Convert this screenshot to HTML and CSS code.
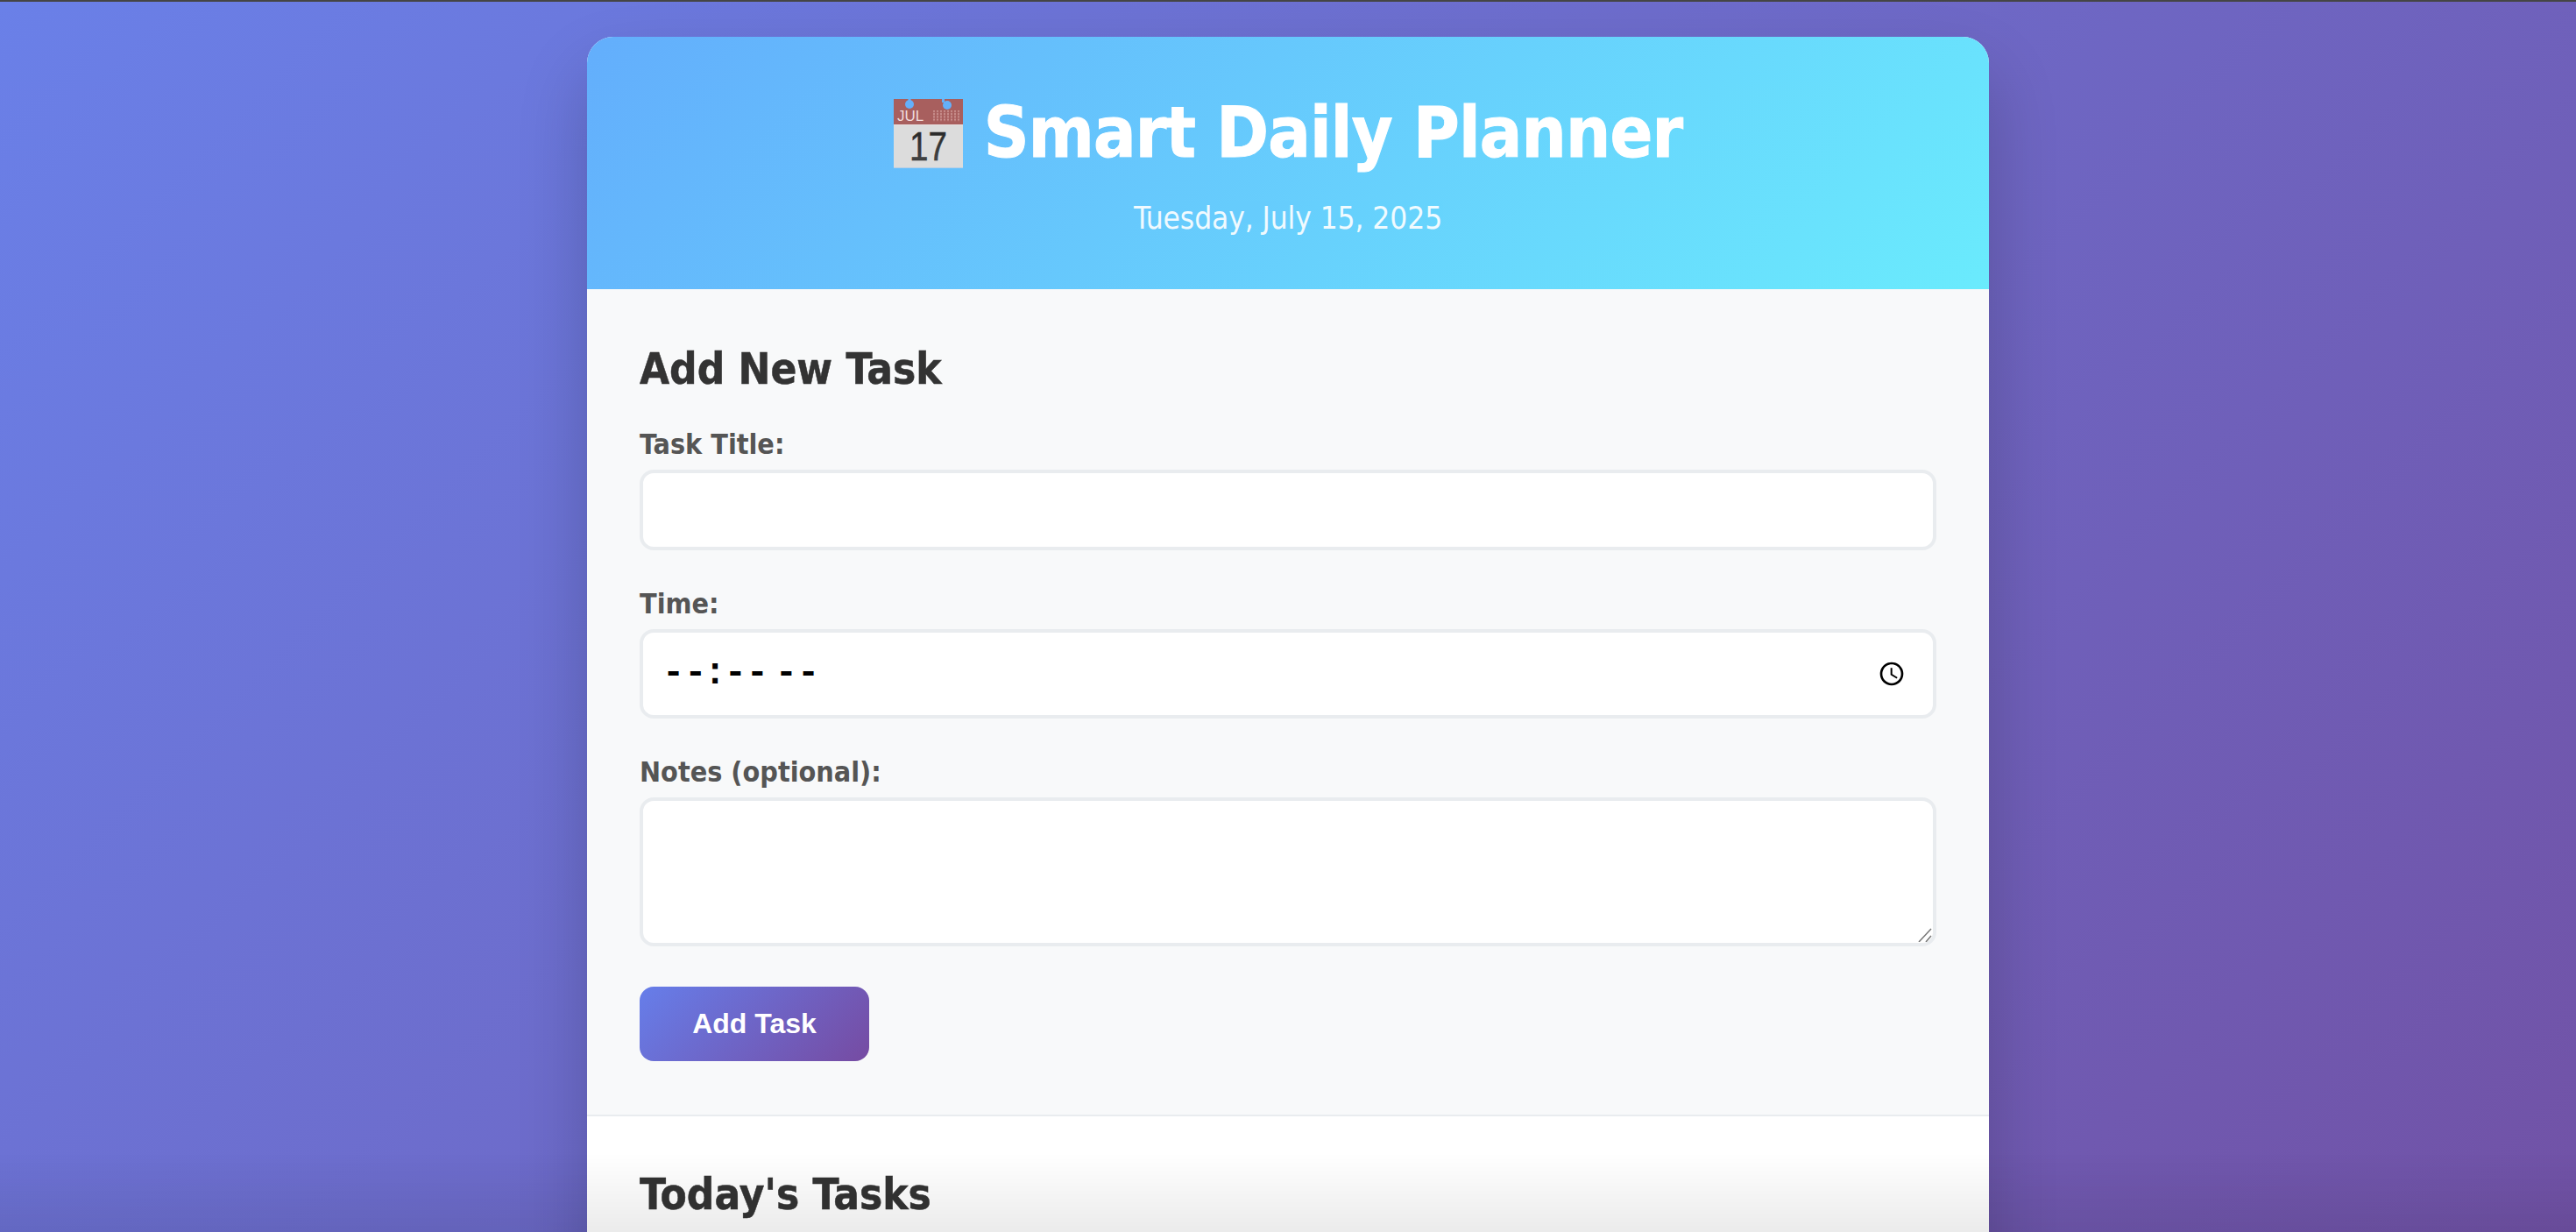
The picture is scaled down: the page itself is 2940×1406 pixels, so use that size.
FILE: index.html
```html
<!DOCTYPE html>
<html lang="en">
<head>
  <meta charset="UTF-8">
  <meta name="viewport" content="width=device-width, initial-scale=1.0">
  <title>Smart Daily Planner</title>
  <link rel="stylesheet" href="styles.css">
</head>
<body>
  <div class="top-line"></div>

  <div class="container">
    <header class="header">
      <h1>
        <!-- Calendar emoji -->
        <svg class="cal-icon" viewBox="0 0 79 79" aria-hidden="true">
          <defs>
            <pattern id="cal-dots" x="45" y="13" width="4" height="3.2" patternUnits="userSpaceOnUse">
              <rect width="2" height="2" fill="#c88f8d"/>
            </pattern>
            <linearGradient id="cal-num" x1="0" y1="0" x2="0" y2="1">
              <stop offset="0" stop-color="#222"/>
              <stop offset="1" stop-color="#4a4a4a"/>
            </linearGradient>
          </defs>
          <rect x="0" y="0" width="79" height="30" fill="#a85f5e"/>
          <rect x="0" y="30" width="79" height="49" fill="#dcdcdc"/>
          <rect x="0" y="29" width="79" height="1" fill="#e8e0e0"/>
          <rect x="0" y="78" width="79" height="1" fill="#b4cfe6"/>
          <circle cx="18" cy="6" r="5" fill="#64b0fb"/>
          <circle cx="61" cy="7" r="5" fill="#64b0fb"/>
          <rect x="16.5" y="0" width="3" height="4" fill="#64b0fb"/>
          <rect x="55" y="0" width="3" height="4" fill="#64b0fb"/>
          <rect x="45" y="13" width="30" height="13" fill="url(#cal-dots)"/>
          <text class="cal-month" x="4" y="25">JUL</text>
          <text class="cal-day" x="18" y="70" textLength="43" lengthAdjust="spacingAndGlyphs" fill="url(#cal-num)">17</text>
        </svg>
        Smart Daily Planner
      </h1>
      <p class="date">Tuesday, July 15, 2025</p>
    </header>

    <section class="form-section">
      <h2>Add New Task</h2>
      <div class="form-group">
        <label for="title">Task Title:</label>
        <input type="text" id="title">
      </div>
      <div class="form-group">
        <label for="time">Time:</label>
        <input type="time" id="time">
      </div>
      <div class="form-group notes-group">
        <label for="notes">Notes (optional):</label>
        <div class="notes-wrap">
          <textarea id="notes"></textarea>
          <svg class="grip" viewBox="0 0 16 16" aria-hidden="true">
            <path d="M1 16 L15 1 M9 16 L15 9" stroke="#777" stroke-width="1.5" fill="none"/>
          </svg>
        </div>
      </div>
      <button class="add-btn" type="button">Add Task</button>
    </section>

    <section class="tasks-section">
      <h2>Today's Tasks</h2>
    </section>
  </div>

  <div class="bottom-fade"></div>
</body>
</html>
```

FILE: styles.css
```css
* {
  margin: 0;
  padding: 0;
  box-sizing: border-box;
}

html, body {
  height: 100%;
  overflow: hidden;
}

body {
  font-family: "DejaVu Sans", Verdana, sans-serif;
  font-stretch: condensed;
  background: linear-gradient(135deg, #6a80e8 0%, #7152a6 100%);
  color: #333;
}

.top-line {
  height: 2px;
  background: #454545;
}

.container {
  width: 1600px;
  margin: 40px auto 0;
  background: white;
  border-radius: 30px 30px 0 0;
  box-shadow: 0 40px 80px rgba(0, 0, 0, 0.2);
  overflow: hidden;
}

.header {
  height: 288px;
  padding-top: 60px;
  text-align: center;
  color: white;
  background: linear-gradient(135deg, #63aefc 0%, #6aebfd 100%);
}

.header h1 {
  display: flex;
  justify-content: center;
  align-items: center;
  gap: 24px;
  font-size: 80px;
  line-height: 100px;
  letter-spacing: -0.8px;
  font-weight: bold;
  -webkit-text-stroke: 1px white;
}

.cal-icon {
  flex: none;
  width: 79px;
  height: 79px;
}

.cal-month {
  font-family: "Liberation Sans", Arial, sans-serif;
  font-size: 17px;
  font-weight: normal;
  letter-spacing: 0;
  fill: #f0dcdc;
  stroke: none;
}

.cal-day {
  font-family: "Liberation Sans", Arial, sans-serif;
  font-size: 47px;
  font-weight: normal;
  letter-spacing: 0;
  stroke: #333;
  stroke-width: 0.5px;
}

.date {
  margin-top: 27px;
  font-size: 35px;
  letter-spacing: -0.1px;
  opacity: 0.9;
}

.form-section {
  height: 944px;
  padding: 60px;
  background: #f8f9fa;
  border-bottom: 2px solid #e9ecef;
}

h2 {
  font-size: 49px;
  line-height: 60px;
  font-weight: bold;
  color: #333;
  -webkit-text-stroke: 0.5px #333;
}

.form-section h2 {
  margin-top: 2px;
  margin-bottom: 35px;
}

.form-group {
  margin-bottom: 41px;
}

.notes-group {
  margin-bottom: 46px;
}

label {
  display: block;
  font-size: 32px;
  line-height: 40px;
  font-weight: bold;
  color: #555;
  margin-bottom: 9px;
}

input, textarea {
  display: block;
  width: 100%;
  background: white;
  border: 4px solid #e9ecef;
  border-radius: 16px;
  padding: 24px 28px;
}

#title {
  height: 92px;
}

#time {
  height: 102px;
  padding-left: 22px;
  font-family: "Liberation Mono", monospace;
  font-size: 42px;
  font-weight: bold;
  color: black;
}

#time::-webkit-datetime-edit-hour-field,
#time::-webkit-datetime-edit-minute-field,
#time::-webkit-datetime-edit-ampm-field,
#time::-webkit-datetime-edit-text {
  padding: 0;
  letter-spacing: -6.2px;
}

#time::-webkit-datetime-edit-hour-field,
#time::-webkit-datetime-edit-minute-field {
  margin-right: -3px;
}

#time::-webkit-datetime-edit-text {
  margin-right: -2px;
}

#time::-webkit-calendar-picker-indicator {
  width: 32px;
  height: 32px;
}

.notes-wrap {
  position: relative;
}

textarea {
  height: 170px;
  resize: none;
}

.grip {
  position: absolute;
  right: 5px;
  bottom: 5px;
  width: 16px;
  height: 16px;
}

.add-btn {
  display: block;
  width: 262px;
  height: 85px;
  border: none;
  border-radius: 16px;
  color: white;
  font-family: "Liberation Sans", Arial, sans-serif;
  font-size: 32px;
  font-weight: bold;
  background: linear-gradient(135deg, #667eea 0%, #764ba2 100%);
}

.tasks-section {
  padding: 60px;
}

.bottom-fade {
  position: fixed;
  left: 0;
  right: 0;
  bottom: 0;
  height: 90px;
  background: linear-gradient(to bottom, rgba(0, 0, 0, 0), rgba(0, 0, 0, 0.08));
}
```
